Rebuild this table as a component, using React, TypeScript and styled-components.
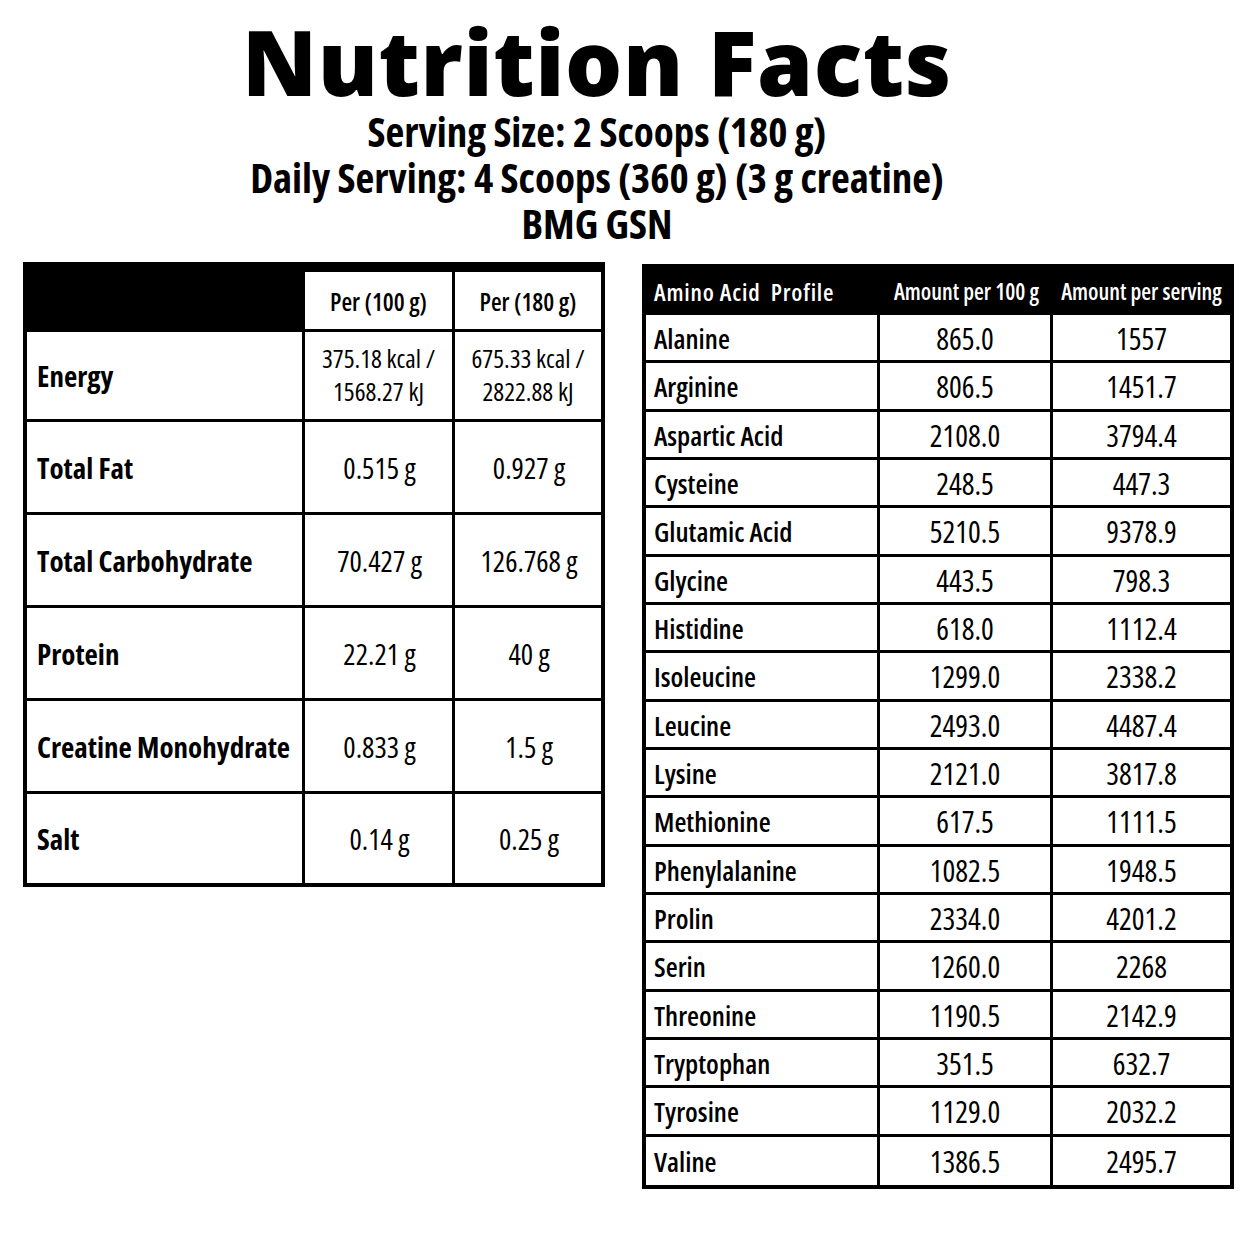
import React from "react";
import styled, { createGlobalStyle } from "styled-components";

const GlobalStyle = createGlobalStyle`
  html, body { margin: 0; padding: 0; background: #ffffff; }
  body { font-family: "Open Sans", "Liberation Sans", sans-serif; color: #000; }
  * { box-sizing: border-box; }
`;

const Page = styled.div`
  width: 1254px;
  height: 1254px;
  background: #fff;
  display: flex;
  flex-direction: column;
`;

const Header = styled.header`
  display: flex;
  flex-direction: column;
  align-items: center;
  padding-top: 21px;
  padding-right: 60px;
`;

const Title = styled.h1`
  margin: 0;
  font-family: "Open Sans", sans-serif;
  font-weight: 800;
  font-size: 90px;
  line-height: 80px;
  letter-spacing: 0.6px;
`;

const SubLines = styled.div`
  margin-top: 7px;
  display: flex;
  flex-direction: column;
  align-items: center;
`;

const SubLine = styled.div`
  font-family: "Open Sans", sans-serif;
  font-stretch: 87.5%;
  font-weight: 700;
  font-size: 41px;
  line-height: 46px;
  white-space: nowrap;
`;

const Tables = styled.main`
  margin-top: 16px;
  display: flex;
  align-items: flex-start;
  gap: 37px;
  padding-left: 23px;
`;

/* ---------- Nutrition table ---------- */

const NutriGrid = styled.section`
  width: 582px;
  border: 4px solid #000;
  display: grid;
  grid-template-columns: 278px 150px 146px;
  grid-template-rows: 66px 90px 93px 93px 93px 93px 89px;
  font-family: "Open Sans", sans-serif;
  font-stretch: 75%;
`;

const NCell = styled.div<{ $last?: boolean; $bottom?: boolean }>`
  display: flex;
  align-items: center;
  justify-content: center;
  text-align: center;
  white-space: nowrap;
  border-right: ${(p) => (p.$last ? "none" : "3px solid #000")};
  border-bottom: ${(p) => (p.$bottom ? "none" : "3px solid #000")};
`;

const NHeadBlank = styled(NCell)`
  background: #000;
`;

const NHeadCell = styled(NCell)`
  border-top: 6px solid #000;
  font-weight: 600;
  font-size: 24.5px;
  padding-top: 2px;
`;

const NLabel = styled(NCell)`
  justify-content: flex-start;
  padding-left: 10px;
  font-weight: 700;
  font-size: 29px;
`;

const NValue = styled(NCell)`
  font-weight: 500;
  font-size: 29px;
  padding-left: 2px;
`;

const NEnergy = styled(NCell)`
  flex-direction: column;
  font-weight: 500;
  font-size: 25.5px;
  line-height: 33px;
  padding-bottom: 2px;
`;

/* ---------- Amino table ---------- */

const AminoGrid = styled.section`
  margin-top: 2px;
  width: 592px;
  border: 4px solid #000;
  display: grid;
  grid-template-columns: 234px 173px 177px;
  grid-template-rows: 47px repeat(18, 48.33px);
  font-family: "Open Sans", sans-serif;
  font-stretch: 75%;
`;

const AHead = styled.div<{ $left?: boolean }>`
  background: #000;
  color: #fff;
  display: flex;
  align-items: center;
  justify-content: ${(p) => (p.$left ? "flex-start" : "center")};
  padding-left: ${(p) => (p.$left ? "8px" : "0")};
  font-weight: 600;
  font-size: ${(p) => (p.$left ? "24px" : "22.5px")};
  letter-spacing: ${(p) => (p.$left ? "0.8px" : "0")};
  white-space: pre;
`;

const ACell = styled.div<{ $last?: boolean; $bottom?: boolean; $label?: boolean }>`
  display: flex;
  align-items: center;
  justify-content: ${(p) => (p.$label ? "flex-start" : "center")};
  padding-left: ${(p) => (p.$label ? "8px" : "0")};
  border-right: ${(p) => (p.$last ? "none" : "3px solid #000")};
  border-bottom: ${(p) => (p.$bottom ? "none" : "3px solid #000")};
  font-weight: ${(p) => (p.$label ? 600 : 500)};
  font-size: ${(p) => (p.$label ? "27.5px" : "30px")};
  padding-top: 2px;
  white-space: nowrap;
`;

const nutrition = [
  { label: "Total Fat", a: "0.515 g", b: "0.927 g" },
  { label: "Total Carbohydrate", a: "70.427 g", b: "126.768 g" },
  { label: "Protein", a: "22.21 g", b: "40 g" },
  { label: "Creatine Monohydrate", a: "0.833 g", b: "1.5 g" },
  { label: "Salt", a: "0.14 g", b: "0.25 g" },
];

const amino = [
  ["Alanine", "865.0", "1557"],
  ["Arginine", "806.5", "1451.7"],
  ["Aspartic Acid", "2108.0", "3794.4"],
  ["Cysteine", "248.5", "447.3"],
  ["Glutamic Acid", "5210.5", "9378.9"],
  ["Glycine", "443.5", "798.3"],
  ["Histidine", "618.0", "1112.4"],
  ["Isoleucine", "1299.0", "2338.2"],
  ["Leucine", "2493.0", "4487.4"],
  ["Lysine", "2121.0", "3817.8"],
  ["Methionine", "617.5", "1111.5"],
  ["Phenylalanine", "1082.5", "1948.5"],
  ["Prolin", "2334.0", "4201.2"],
  ["Serin", "1260.0", "2268"],
  ["Threonine", "1190.5", "2142.9"],
  ["Tryptophan", "351.5", "632.7"],
  ["Tyrosine", "1129.0", "2032.2"],
  ["Valine", "1386.5", "2495.7"],
];

export default function App() {
  return (
    <Page>
      <GlobalStyle />
      <Header>
        <Title>Nutrition Facts</Title>
        <SubLines>
          <SubLine>Serving Size: 2 Scoops (180 g)</SubLine>
          <SubLine>Daily Serving: 4 Scoops (360 g) (3 g creatine)</SubLine>
          <SubLine>BMG GSN</SubLine>
        </SubLines>
      </Header>
      <Tables>
        <NutriGrid>
          <NHeadBlank />
          <NHeadCell>Per (100 g)</NHeadCell>
          <NHeadCell $last>Per (180 g)</NHeadCell>

          <NLabel>Energy</NLabel>
          <NEnergy>
            <span>375.18 kcal /</span>
            <span>1568.27 kJ</span>
          </NEnergy>
          <NEnergy $last>
            <span>675.33 kcal /</span>
            <span>2822.88 kJ</span>
          </NEnergy>

          {nutrition.map((r, i) => {
            const bottom = i === nutrition.length - 1;
            return (
              <React.Fragment key={r.label}>
                <NLabel $bottom={bottom}>{r.label}</NLabel>
                <NValue $bottom={bottom}>{r.a}</NValue>
                <NValue $bottom={bottom} $last>
                  {r.b}
                </NValue>
              </React.Fragment>
            );
          })}
        </NutriGrid>

        <AminoGrid>
          <AHead $left>{"Amino Acid  Profile"}</AHead>
          <AHead>Amount per 100 g</AHead>
          <AHead>Amount per serving</AHead>
          {amino.map(([name, a, b], i) => {
            const bottom = i === amino.length - 1;
            return (
              <React.Fragment key={name}>
                <ACell $label $bottom={bottom}>
                  {name}
                </ACell>
                <ACell $bottom={bottom}>{a}</ACell>
                <ACell $bottom={bottom} $last>
                  {b}
                </ACell>
              </React.Fragment>
            );
          })}
        </AminoGrid>
      </Tables>
    </Page>
  );
}
